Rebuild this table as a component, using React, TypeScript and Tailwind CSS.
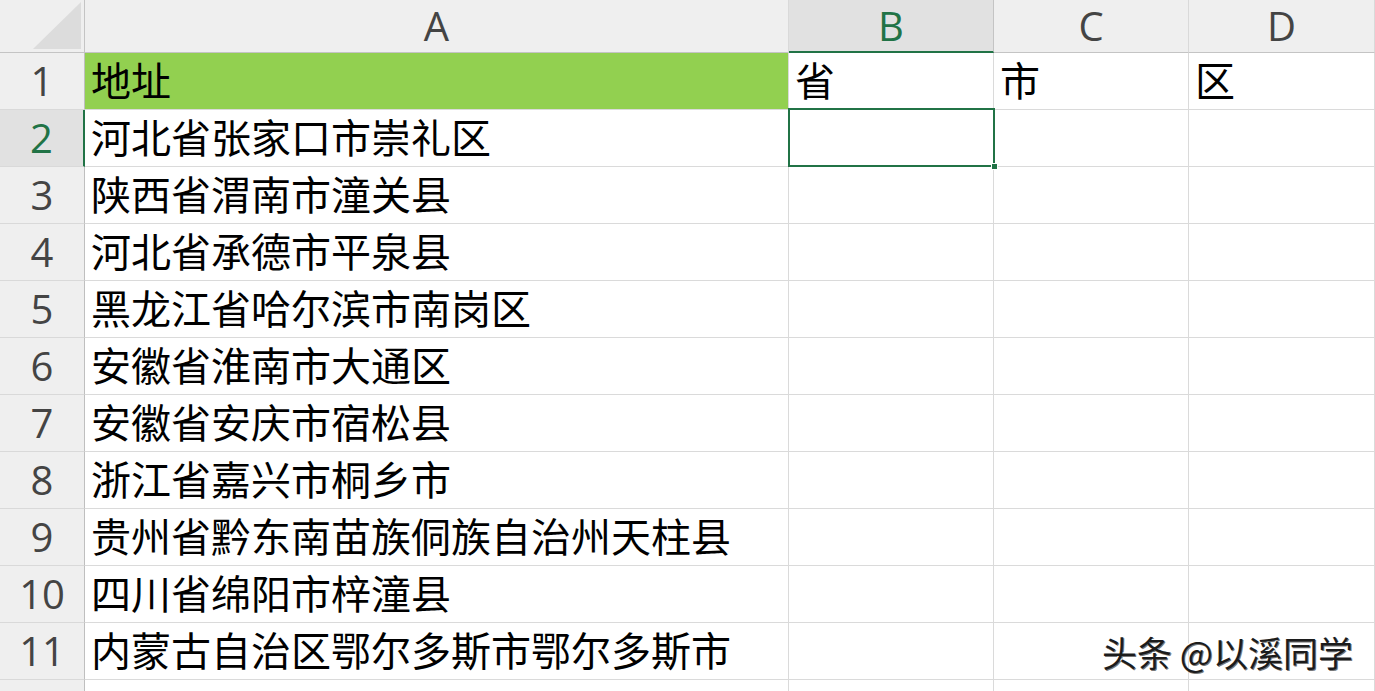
const cols = ["A", "B", "C", "D"];

const rows: string[][] = [
  ["地址", "省", "市", "区"],
  ["河北省张家口市崇礼区", "", "", ""],
  ["陕西省渭南市潼关县", "", "", ""],
  ["河北省承德市平泉县", "", "", ""],
  ["黑龙江省哈尔滨市南岗区", "", "", ""],
  ["安徽省淮南市大通区", "", "", ""],
  ["安徽省安庆市宿松县", "", "", ""],
  ["浙江省嘉兴市桐乡市", "", "", ""],
  ["贵州省黔东南苗族侗族自治州天柱县", "", "", ""],
  ["四川省绵阳市梓潼县", "", "", ""],
  ["内蒙古自治区鄂尔多斯市鄂尔多斯市", "", "", ""],
  ["", "", "", ""],
];

const cjk = "font-['Noto_Sans_CJK_SC',sans-serif]";
const latin = "font-['Open_Sans','Noto_Sans',sans-serif]";

export default function App() {
  return (
    <div className="relative w-[1375px] h-[691px] overflow-hidden bg-white">
      <div className="grid grid-cols-[85px_704px_205px_195px_1fr]">
        {/* Corner */}
        <div className="h-[53px] bg-[#efefef] border-r border-b border-[#c4c4c4] flex items-end justify-end pr-[3px] pb-[3px]">
          <svg width="48" height="47" viewBox="0 0 48 47">
            <polygon points="48,0 48,47 0,47" fill="#dcdcdc" />
          </svg>
        </div>
        {/* Column headers */}
        {cols.map((c) => {
          const active = c === "B";
          return (
            <div
              key={c}
              className={`h-[53px] flex items-center justify-center text-[40px] leading-[48px] ${latin} border-r ${
                active
                  ? "bg-[#e1e1e1] text-[#217346] border-b-2 border-b-[#217346] border-r-[#c4c4c4]"
                  : "bg-[#efefef] text-[#444] border-b border-b-[#c4c4c4] border-r-[#d9d9d9]"
              }`}
            >
              {c}
            </div>
          );
        })}

        {rows.map((r, i) => {
          const n = i + 1;
          const active = n === 2;
          return [
            <div
              key={`n${n}`}
              className={`h-[57px] flex items-center justify-center text-[40px] leading-[48px] ${latin} border-b border-b-[#d9d9d9] ${
                active
                  ? "bg-[#e1e1e1] text-[#217346] border-r-2 border-r-[#217346]"
                  : "bg-[#efefef] text-[#444] border-r border-r-[#bfbfbf]"
              }`}
            >
              {n}
            </div>,
            ...r.map((v, j) => {
              const fill = n === 1 && j === 0;
              return (
                <div
                  key={`c${n}-${j}`}
                  className={`h-[57px] flex items-center pl-[6px] pb-[4px] whitespace-nowrap text-[40px] leading-none text-black ${cjk} border-r border-b border-[#dadada] ${
                    fill ? "bg-[#92d050]" : ""
                  }`}
                >
                  {v}
                </div>
              );
            }),
          ];
        })}
      </div>

      {/* Selected cell B2 */}
      <div className="absolute left-[788px] top-[108px] w-[207px] h-[59px] border-2 border-[#217346]">
        <div className="absolute -right-[5px] -bottom-[5px] w-[7px] h-[7px] bg-[#217346] border border-white" />
      </div>

      {/* Watermark */}
      <div
        className={`absolute left-[1102px] top-[634px] text-[35px] leading-none text-[#1c1c1c] ${cjk} [text-shadow:-1px_-1px_0_#fff,1px_1px_0_#777]`}
      >
        头条 @以溪同学
      </div>
    </div>
  );
}
